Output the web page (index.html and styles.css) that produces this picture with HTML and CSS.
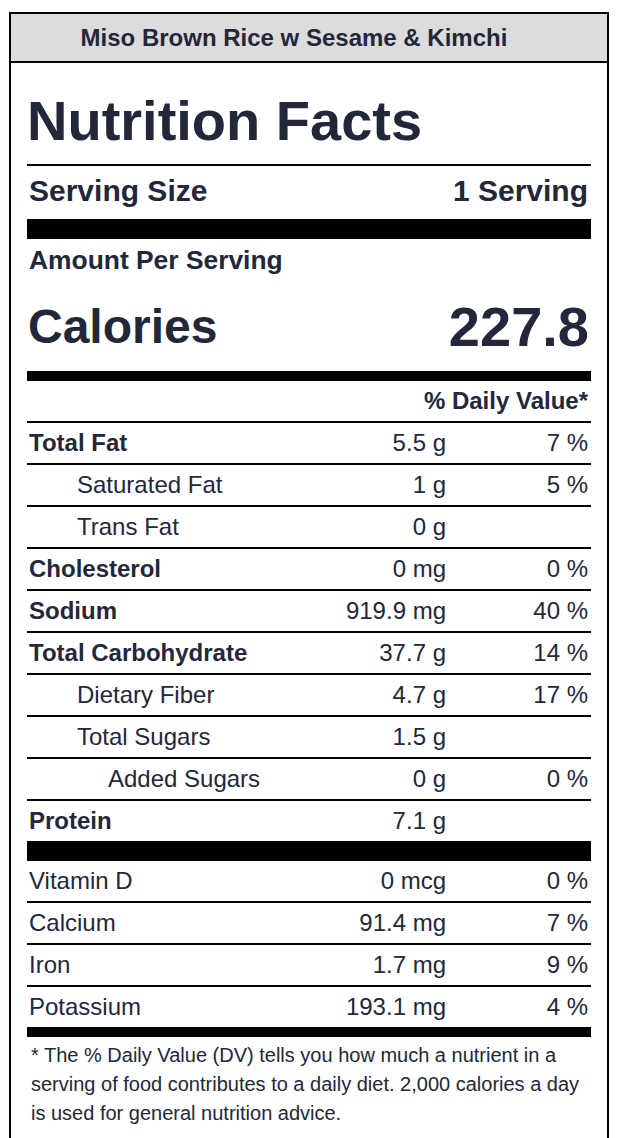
FILE: index.html
```html
<!DOCTYPE html>
<html lang="en">
<head>
<meta charset="utf-8">
<title>Miso Brown Rice w Sesame &amp; Kimchi – Nutrition Facts</title>
<link rel="stylesheet" href="styles.css">
</head>
<body>
<div class="page">
  <section class="label">
    <div class="label-title">Miso Brown Rice w Sesame &amp; Kimchi</div>
    <div class="label-body">
      <h1 class="nf-heading">Nutrition Facts</h1>
      <div class="serving">
        <span>Serving Size</span>
        <span>1 Serving</span>
      </div>
      <div class="bar bar-thick"></div>
      <div class="amount-per">Amount Per Serving</div>
      <div class="calories">
        <span class="calories-label">Calories</span>
        <span class="calories-value">227.8</span>
      </div>
      <div class="bar bar-medium"></div>
      <div class="dv-head">% Daily Value*</div>

      <div class="nutrients">
        <div class="row"><span class="name bold">Total Fat</span><span class="amt">5.5 g</span><span class="dv">7 %</span></div>
        <div class="row"><span class="name indent1">Saturated Fat</span><span class="amt">1 g</span><span class="dv">5 %</span></div>
        <div class="row"><span class="name indent1">Trans Fat</span><span class="amt">0 g</span><span class="dv"></span></div>
        <div class="row"><span class="name bold">Cholesterol</span><span class="amt">0 mg</span><span class="dv">0 %</span></div>
        <div class="row"><span class="name bold">Sodium</span><span class="amt">919.9 mg</span><span class="dv">40 %</span></div>
        <div class="row"><span class="name bold">Total Carbohydrate</span><span class="amt">37.7 g</span><span class="dv">14 %</span></div>
        <div class="row"><span class="name indent1">Dietary Fiber</span><span class="amt">4.7 g</span><span class="dv">17 %</span></div>
        <div class="row"><span class="name indent1">Total Sugars</span><span class="amt">1.5 g</span><span class="dv"></span></div>
        <div class="row"><span class="name indent2">Added Sugars</span><span class="amt">0 g</span><span class="dv">0 %</span></div>
        <div class="row"><span class="name bold">Protein</span><span class="amt">7.1 g</span><span class="dv"></span></div>
      </div>

      <div class="bar bar-thick"></div>

      <div class="nutrients">
        <div class="row"><span class="name">Vitamin D</span><span class="amt">0 mcg</span><span class="dv">0 %</span></div>
        <div class="row"><span class="name">Calcium</span><span class="amt">91.4 mg</span><span class="dv">7 %</span></div>
        <div class="row"><span class="name">Iron</span><span class="amt">1.7 mg</span><span class="dv">9 %</span></div>
        <div class="row"><span class="name">Potassium</span><span class="amt">193.1 mg</span><span class="dv">4 %</span></div>
      </div>

      <div class="bar bar-medium"></div>

      <p class="footnote">* The % Daily Value (DV) tells you how much a nutrient in a serving of food contributes to a daily diet. 2,000 calories a day is used for general nutrition advice.</p>
    </div>
  </section>
</div>
</body>
</html>
```

FILE: styles.css
```css
* {
  box-sizing: border-box;
}

html, body {
  margin: 0;
  padding: 0;
  background: #ffffff;
}

body {
  font-family: "Liberation Sans", Arial, Helvetica, sans-serif;
  color: #23273a;
}

.page {
  padding: 12px 0 0 9px;
}

.label {
  width: 600px;
  border: 2px solid #000;
}

.label-title {
  height: 49px;
  background: #dcdcdc;
  border-bottom: 2px solid #000;
  font-size: 24px;
  font-weight: bold;
  line-height: 47px;
  text-align: center;
  padding-right: 30px;
}

.label-body {
  padding: 0 16px 14px 16px;
}

.nf-heading {
  margin: 26px 0 0 0;
  font-size: 56px;
  line-height: 64px;
  font-weight: bold;
  padding-bottom: 11px;
  border-bottom: 2px solid #000;
}

.serving {
  height: 53px;
  display: flex;
  justify-content: space-between;
  align-items: center;
  padding: 0 3px 3px 2px;
  font-size: 30px;
  font-weight: bold;
  line-height: 1;
}

.bar {
  background: #000;
}

.bar-thick {
  height: 20px;
}

.bar-medium {
  height: 10px;
}

.amount-per {
  padding: 8px 0 0 2px;
  font-size: 26.4px;
  font-weight: bold;
  line-height: 26px;
}

.calories {
  height: 98px;
  padding: 10px 2px 0 1px;
  display: flex;
  justify-content: space-between;
  align-items: center;
  font-weight: bold;
  line-height: 1;
}

.calories-label {
  font-size: 48px;
}

.calories-value {
  font-size: 56px;
}

.dv-head {
  height: 42px;
  line-height: 40px;
  border-bottom: 2px solid #000;
  text-align: right;
  padding-right: 3px;
  font-size: 24px;
  font-weight: bold;
}

.nutrients {
  display: flex;
  flex-direction: column;
}

.row {
  display: grid;
  grid-template-columns: 1fr 120px 145px;
  height: 42px;
  line-height: 40px;
  border-bottom: 2px solid #000;
  font-size: 24px;
}

.row:last-child {
  height: 40px;
  border-bottom: none;
}

.name {
  padding-left: 2px;
  white-space: nowrap;
}

.name.bold {
  font-weight: bold;
}

.name.indent1 {
  padding-left: 50px;
}

.name.indent2 {
  padding-left: 81px;
}

.amt {
  text-align: right;
  white-space: nowrap;
}

.dv {
  text-align: right;
  padding-right: 3px;
  white-space: nowrap;
}

.footnote {
  margin: 0;
  padding: 4px 8px 0 4px;
  font-size: 20px;
  line-height: 29px;
}
```
